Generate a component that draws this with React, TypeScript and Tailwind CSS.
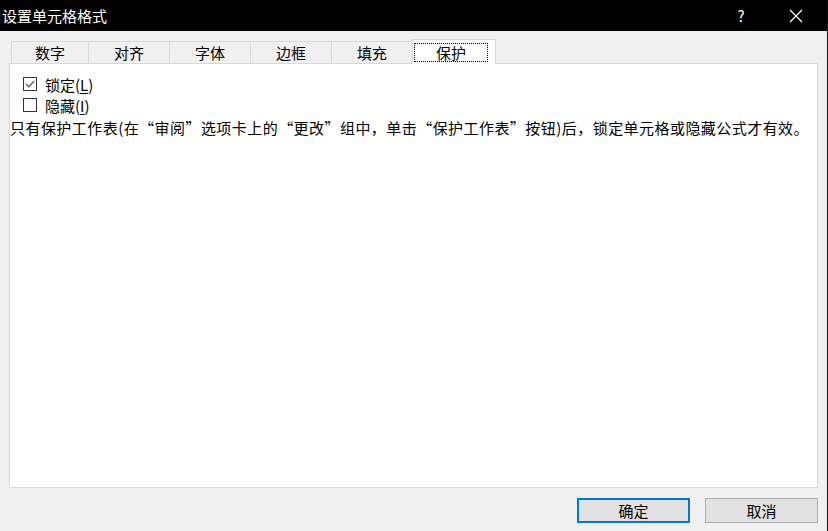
import React from "react"

const font = { fontFamily: '"Noto Sans CJK SC", "Noto Sans", sans-serif' }

const tabs = ["数字", "对齐", "字体", "边框", "填充"]

function CheckBox({ checked }: { checked?: boolean }) {
  return (
    <div className="w-[14px] h-[14px] min-w-[14px] border border-[#333333] bg-white flex items-center justify-center shrink-0 box-border">
      {checked && (
        <svg width="12" height="12" viewBox="0 0 12 12">
          <path d="M2 6 L4.8 8.8 L10.2 3" fill="none" stroke="#666666" strokeWidth="1.3" />
        </svg>
      )}
    </div>
  )
}

export default function App() {
  return (
    <div className="w-[828px] h-[531px] bg-[#f0f0f0] border-r border-[#111111] flex flex-col text-black" style={font}>
      {/* title bar */}
      <div className="h-[31px] bg-black flex items-center text-white shrink-0">
        <span className="pl-[2px] text-[15px] leading-none">设置单元格格式</span>
        <div className="ml-auto flex items-center">
          <span className="text-[15px] leading-none w-[20px] text-center mr-[38px]">?</span>
          <svg width="14" height="14" viewBox="0 0 14 14" className="mr-[24px]">
            <path d="M1 1 L13 13 M13 1 L1 13" stroke="#ffffff" strokeWidth="1.2" />
          </svg>
        </div>
      </div>

      {/* tab strip */}
      <div className="mt-[8px] h-[24px] flex pl-[11px] relative z-10">
        {tabs.map((t, i) => (
          <div
            key={t}
            className={`mt-[2px] h-[22px] border-t border-r border-[#d9d9d9] flex items-center justify-center text-[15px] leading-none ${
              i === 0 ? "w-[78px] border-l" : "w-[81px]"
            }`}
          >
            {t}
          </div>
        ))}
        <div className="-ml-[1px] w-[84px] h-[25px] bg-white border-t border-l border-r border-[#d9d9d9] flex items-center">
          <div className="ml-[1px] mt-[1px] w-[74px] h-[19px] border border-dotted border-black flex items-center justify-center text-[15px] leading-none">
            保护
          </div>
        </div>
      </div>

      {/* panel */}
      <div className="mx-[9px] h-[425px] bg-white border border-[#d9d9d9] pt-[12px] shrink-0">
        <div className="flex items-center gap-[8px] pl-[13px] h-[16px]">
          <CheckBox checked />
          <span className="text-[15px] leading-none">
            锁定(<span className="underline underline-offset-2">L</span>)
          </span>
        </div>
        <div className="flex items-center gap-[8px] pl-[13px] h-[16px] mt-[5px]">
          <CheckBox />
          <span className="text-[15px] leading-none">
            隐藏(<span className="underline underline-offset-2">I</span>)
          </span>
        </div>
        <div className="mt-[6px] text-[15px] leading-[18px] tracking-[0.45px] whitespace-nowrap">
          只有保护工作表(在“审阅”选项卡上的“更改”组中，单击“保护工作表”按钮)后，锁定单元格或隐藏公式才有效。
        </div>
      </div>

      {/* buttons */}
      <div className="flex justify-end gap-[15px] pr-[9px] mt-[10px]">
        <button className="w-[113px] h-[25px] bg-[#e1e1e1] border-2 border-[#0078d7] text-[15px] leading-none flex items-center justify-center">
          确定
        </button>
        <button className="w-[113px] h-[25px] bg-[#e1e1e1] border border-[#adadad] text-[15px] leading-none flex items-center justify-center">
          取消
        </button>
      </div>
    </div>
  )
}
